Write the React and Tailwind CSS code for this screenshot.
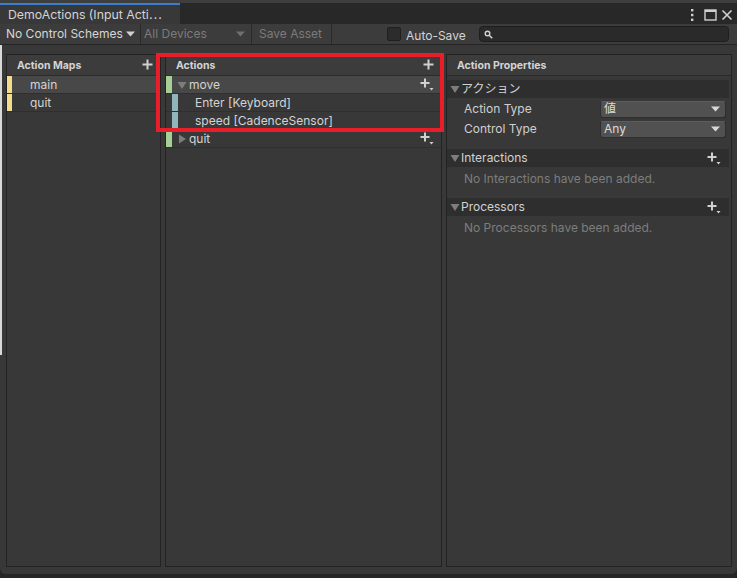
import React from "react";

const Tri = ({ down = true, color = "#7d7d7d" }) => (
  <svg width="10" height="10" viewBox="0 0 10 10" className="shrink-0">
    {down ? (
      <polygon points="0.5,2 9.5,2 5,9" fill={color} />
    ) : (
      <polygon points="2,0.5 9,5 2,9.5" fill={color} />
    )}
  </svg>
);

const Plus = () => (
  <svg width="11" height="11" viewBox="0 0 11 11" className="shrink-0">
    <path d="M5.5 0.5v10M0.5 5.5h10" stroke="#d0d0d0" strokeWidth="2" />
  </svg>
);

const PlusDrop = () => (
  <svg width="14" height="13" viewBox="0 0 14 13" className="shrink-0">
    <path d="M5 0.5v9M0.5 5h9" stroke="#d0d0d0" strokeWidth="2" />
    <polygon points="9.5,10 13.5,10 11.5,12.5" fill="#d0d0d0" />
  </svg>
);

const SmallDown = ({ color = "#d0d0d0" }) => (
  <svg width="9" height="6" viewBox="0 0 9 6" className="shrink-0">
    <polygon points="0,0.5 9,0.5 4.5,5.5" fill={color} />
  </svg>
);

function PanelHeader({ title, plus }) {
  return (
    <div className="h-[21px] shrink-0 flex items-center justify-between pl-[10px] pr-[7px] pt-[2px] bg-[#3c3c3c] border-b border-[#2b2b2b]">
      <span className="text-[10.5px] font-bold text-[#d4d4d4]">{title}</span>
      {plus && <div className="-mt-[3px]"><Plus /></div>}
    </div>
  );
}

function Foldout({ title, plus }) {
  return (
    <div className="h-[18px] flex items-center bg-[#2e2e2e] pl-[3px] pr-[8px]">
      <Tri />
      <span className="ml-[1px] text-[#d2d2d2]">{title}</span>
      <div className="flex-1" />
      {plus && <PlusDrop />}
    </div>
  );
}

function Dropdown({ value }) {
  return (
    <div className="w-[126px] h-[17px] rounded-[3px] bg-[#515151] border border-[#2f2f2f] border-t-[#5c5c5c] flex items-center justify-between pl-[3px] pr-[5px]">
      <span className="text-[#dcdcdc] leading-none">{value}</span>
      <SmallDown color="#d8d8d8" />
    </div>
  );
}

export default function App() {
  return (
    <div className="relative w-[737px] h-[578px] bg-[#262626] flex flex-col overflow-hidden font-['Inter','Noto_Sans_CJK_JP',sans-serif] text-[12px] text-[#d2d2d2]">
      <div className="h-[3px] shrink-0 bg-[#3e3e3e]" />
      {/* title bar */}
      <div className="h-[21px] shrink-0 flex bg-[#282828]">
        <div className="w-[180px] bg-[#383838] border-t-2 border-[#3a7fcf] flex items-center pl-[8px] pt-[1px]">
          <span className="text-[12.3px] text-[#d4d4d4] whitespace-nowrap">DemoActions (Input Acti⋯</span>
        </div>
        <div className="flex-1" />
        <div className="flex items-center pr-[4px] pt-[2px]">
          <svg width="6" height="14" viewBox="0 0 6 14">
            <rect x="2" y="1" width="2.4" height="2.4" fill="#d0d0d0" />
            <rect x="2" y="5.8" width="2.4" height="2.4" fill="#d0d0d0" />
            <rect x="2" y="10.6" width="2.4" height="2.4" fill="#d0d0d0" />
          </svg>
          <svg width="13" height="12" viewBox="0 0 13 12" className="ml-[9px]">
            <rect x="1" y="1" width="11" height="10" fill="none" stroke="#d0d0d0" strokeWidth="1.4" />
            <rect x="1" y="1" width="11" height="2" fill="#d0d0d0" />
          </svg>
          <svg width="12" height="12" viewBox="0 0 12 12" className="ml-[4px]">
            <path d="M1.5 1.5l9 9M10.5 1.5l-9 9" stroke="#d0d0d0" strokeWidth="1.6" />
          </svg>
        </div>
      </div>
      {/* toolbar */}
      <div className="h-[21px] shrink-0 flex items-center bg-[#3c3c3c] border-b border-[#242424]">
        <div className="h-full w-[141px] flex items-center pl-[6px] gap-[3px] border-r border-[#2a2a2a]">
          <span className="text-[#d6d6d6] whitespace-nowrap">No Control Schemes</span>
          <SmallDown />
        </div>
        <div className="h-full w-[111px] flex items-center justify-between pl-[3px] pr-[6px] border-r border-[#2a2a2a]">
          <span className="text-[#7b7b7b] whitespace-nowrap">All Devices</span>
          <SmallDown color="#6f6f6f" />
        </div>
        <div className="h-full w-[80px] flex items-center pl-[7px] border-r border-[#2a2a2a]">
          <span className="text-[#7b7b7b] whitespace-nowrap">Save Asset</span>
        </div>
        <div className="w-[55px]" />
        <div className="w-[14px] h-[14px] rounded-[2px] bg-[#2c2c2c] border border-[#1f1f1f]" />
        <span className="ml-[5px] mt-[3px] text-[#d4d4d4] whitespace-nowrap">Auto-Save</span>
        <div className="ml-[13px] w-[250px] h-[16px] rounded-[4px] bg-[#2a2a2a] border border-[#1e1e1e] flex items-center pl-[4px]">
          <svg width="9" height="9" viewBox="0 0 9 9">
            <circle cx="3.5" cy="3.5" r="2.3" fill="none" stroke="#d0d0d0" strokeWidth="1.4" />
            <path d="M5.2 5.2l3 3" stroke="#d0d0d0" strokeWidth="1.6" />
          </svg>
        </div>
      </div>
      {/* body */}
      <div className="flex-1 bg-[#383838] flex gap-[4px] pl-[6px] pt-[9px] pb-[7px] rounded-b-[6px]">
        {/* Action Maps */}
        <div className="w-[155px] flex flex-col border border-[#232323]">
          <PanelHeader title="Action Maps" plus />
          <div className="h-[18px] flex items-center bg-[#484848] border-b border-[#2f2f2f]">
            <div className="w-[5px] h-full bg-[#f3dd8c]" />
            <span className="ml-[18px] text-[#d4d4d4]">main</span>
          </div>
          <div className="h-[18px] flex items-center border-b border-[#2f2f2f]">
            <div className="w-[5px] h-full bg-[#f3dd8c]" />
            <span className="ml-[18px] text-[#d4d4d4]">quit</span>
          </div>
        </div>
        {/* Actions */}
        <div className="w-[277px] flex flex-col border border-[#232323]">
          <PanelHeader title="Actions" plus />
          <div className="h-[18px] flex items-center bg-[#484848] border-b border-[#2f2f2f] pr-[7px]">
            <div className="w-[6px] h-full bg-[#a5cf95]" />
            <div className="ml-[5px]"><Tri /></div>
            <span className="ml-[2px] text-[#d4d4d4]">move</span>
            <div className="flex-1" />
            <PlusDrop />
          </div>
          <div className="h-[18px] flex items-center border-b border-[#2f2f2f]">
            <div className="ml-[6px] w-[6px] h-full bg-[#90b6bb]" />
            <span className="ml-[17px] text-[#d4d4d4]">Enter [Keyboard]</span>
          </div>
          <div className="h-[18px] flex items-center border-b border-[#2f2f2f]">
            <div className="ml-[6px] w-[6px] h-full bg-[#90b6bb]" />
            <span className="ml-[17px] text-[#d4d4d4]">speed [CadenceSensor]</span>
          </div>
          <div className="h-[18px] flex items-center border-b border-[#2f2f2f] pr-[7px]">
            <div className="w-[6px] h-full bg-[#a5cf95]" />
            <div className="ml-[5px]"><Tri down={false} /></div>
            <span className="ml-[2px] text-[#d4d4d4]">quit</span>
            <div className="flex-1" />
            <PlusDrop />
          </div>
        </div>
        {/* Action Properties */}
        <div className="w-[286px] flex flex-col border border-[#232323]">
          <PanelHeader title="Action Properties" />
          <div className="mt-[4px] mr-[2px] flex flex-col">
            <Foldout title="アクション" />
            <div className="h-[20px] flex items-center justify-between pl-[17px] pr-[3px] mt-[1px]">
              <span className="text-[#cfcfcf]">Action Type</span>
              <Dropdown value="値" />
            </div>
            <div className="h-[20px] flex items-center justify-between pl-[17px] pr-[3px]">
              <span className="text-[#cfcfcf]">Control Type</span>
              <Dropdown value="Any" />
            </div>
            <div className="mt-[10px]">
              <Foldout title="Interactions" plus />
            </div>
            <div className="h-[24px] flex items-center pl-[17px]">
              <span className="text-[#7d7d7d]">No Interactions have been added.</span>
            </div>
            <div className="mt-[7px]">
              <Foldout title="Processors" plus />
            </div>
            <div className="h-[24px] flex items-center pl-[17px]">
              <span className="text-[#7d7d7d]">No Processors have been added.</span>
            </div>
          </div>
        </div>
      </div>
      <div className="h-[4px] shrink-0" />
      {/* highlight box */}
      <div className="absolute left-[156px] top-[53px] w-[288px] h-[79px] border-[4px] border-[#e81f28] pointer-events-none" />
      {/* left edge strip */}
      <div className="absolute left-0 top-[45px] w-[2px] h-[310px] bg-[#d9d9d9]" />
    </div>
  );
}
